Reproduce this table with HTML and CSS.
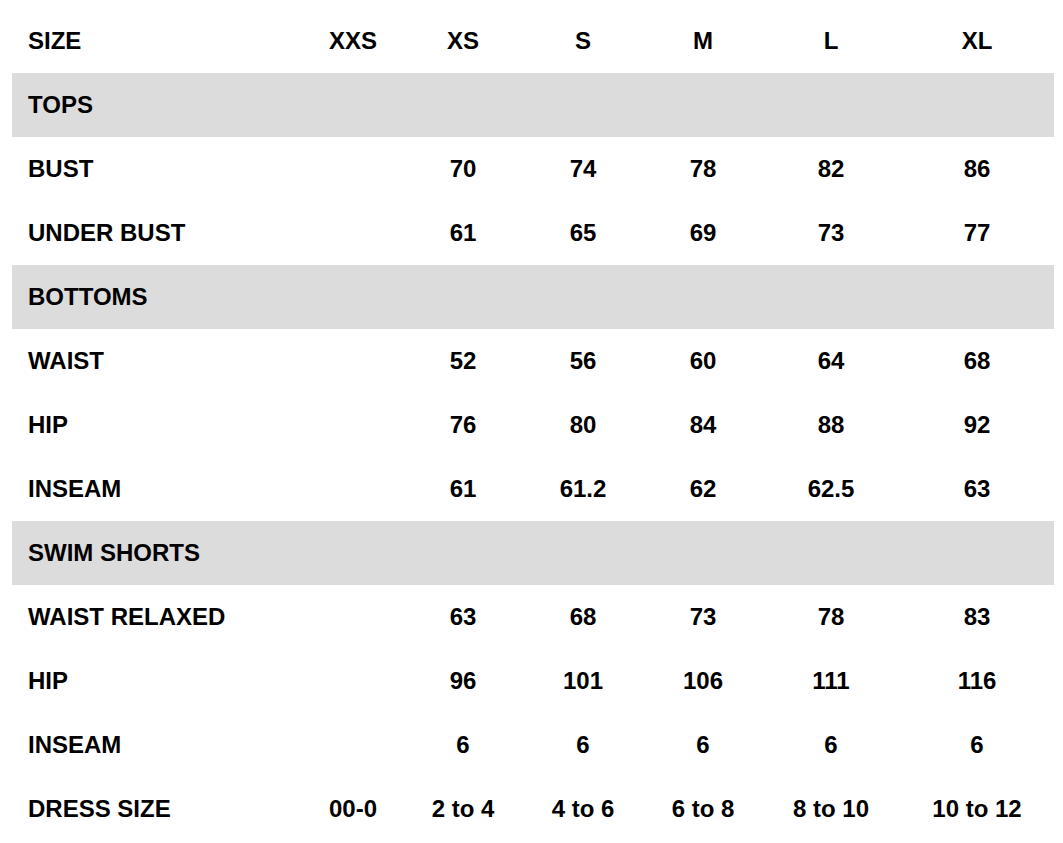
FILE: index.html
```html
<!DOCTYPE html>
<html lang="en">
<head>
<meta charset="utf-8">
<title>Size Chart</title>
<link rel="stylesheet" href="styles.css">
</head>
<body>
<table class="chart">
  <colgroup>
    <col class="c-label"><col class="c-xxs"><col class="c-xs"><col class="c-s"><col class="c-m"><col class="c-l"><col class="c-xl">
  </colgroup>
  <thead>
    <tr><th>SIZE</th><th>XXS</th><th>XS</th><th>S</th><th>M</th><th>L</th><th>XL</th></tr>
  </thead>
  <tbody>
    <tr class="section"><td colspan="7">TOPS</td></tr>
    <tr><td>BUST</td><td></td><td>70</td><td>74</td><td>78</td><td>82</td><td>86</td></tr>
    <tr><td>UNDER BUST</td><td></td><td>61</td><td>65</td><td>69</td><td>73</td><td>77</td></tr>
    <tr class="section"><td colspan="7">BOTTOMS</td></tr>
    <tr><td>WAIST</td><td></td><td>52</td><td>56</td><td>60</td><td>64</td><td>68</td></tr>
    <tr><td>HIP</td><td></td><td>76</td><td>80</td><td>84</td><td>88</td><td>92</td></tr>
    <tr><td>INSEAM</td><td></td><td>61</td><td>61.2</td><td>62</td><td>62.5</td><td>63</td></tr>
    <tr class="section"><td colspan="7">SWIM SHORTS</td></tr>
    <tr><td>WAIST RELAXED</td><td></td><td>63</td><td>68</td><td>73</td><td>78</td><td>83</td></tr>
    <tr><td>HIP</td><td></td><td>96</td><td>101</td><td>106</td><td>111</td><td>116</td></tr>
    <tr><td>INSEAM</td><td></td><td>6</td><td>6</td><td>6</td><td>6</td><td>6</td></tr>
    <tr><td>DRESS SIZE</td><td>00-0</td><td>2 to 4</td><td>4 to 6</td><td>6 to 8</td><td>8 to 10</td><td>10 to 12</td></tr>
  </tbody>
</table>
</body>
</html>
```
FILE: styles.css
```css
html, body {
  margin: 0;
  padding: 0;
  background: #ffffff;
}
body {
  padding: 9px 9px 0 12px;
  font-family: "Liberation Sans", Arial, sans-serif;
  color: #000000;
}
.chart {
  width: 1042px;
  border-collapse: collapse;
  border-spacing: 0;
  table-layout: fixed;
}
.c-label { width: 290px; }
.c-xxs { width: 102px; }
.c-xs { width: 118px; }
.c-s { width: 122px; }
.c-m { width: 118px; }
.c-l { width: 138px; }
.c-xl { width: 154px; }
.chart th,
.chart td {
  height: 64px;
  padding: 0;
  font-size: 24px;
  font-weight: bold;
  text-align: center;
  vertical-align: middle;
  white-space: nowrap;
  box-sizing: border-box;
}
.chart th:first-child,
.chart td:first-child {
  text-align: left;
  padding-left: 16px;
}
.section td {
  background: #dcdcdc;
}
```
